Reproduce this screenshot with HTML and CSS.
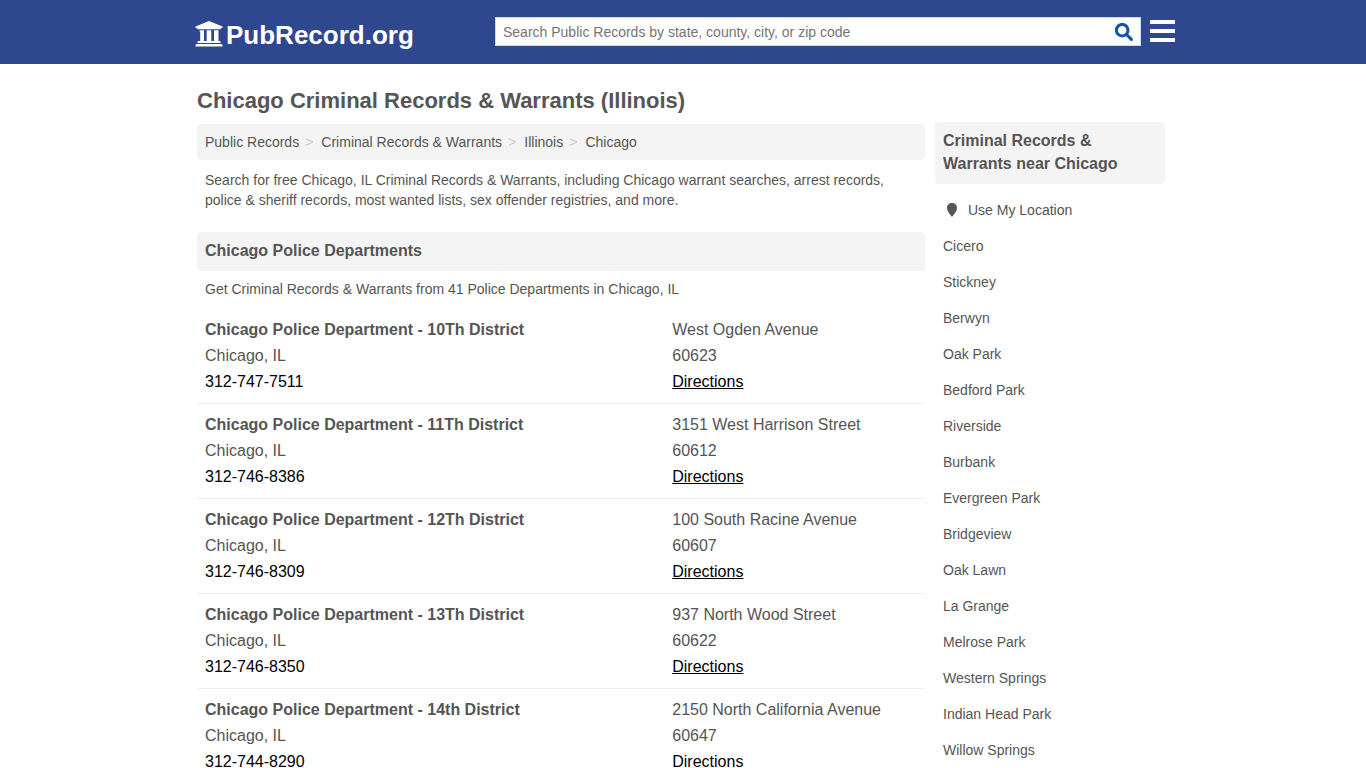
FILE: index.html
```html
<!DOCTYPE html>
<html lang="en">
	<head>
		<meta charset="utf-8" />
		<title>Chicago Criminal Records &amp; Warrants (Illinois)</title>
		<meta name="viewport" content="width=device-width, initial-scale=1" />
		<link rel="stylesheet" href="styles.css">
	</head>
	<body>

		<header class="header">
			<div class="header-inner">
				<a class="logo" href="#">
					<svg class="logo-icon" viewBox="0 0 28 26" aria-hidden="true">
						<path d="M14 0 L27.5 5.5 V7 H26 Q26 8.3 25 8.3 H3 Q2 8.3 2 7 H0.5 V5.5 Z M4.5 9.3 H9 V20 H11.7 V9.3 H16.3 V20 H19 V9.3 H23.5 V20 H24.5 Q25.5 20 25.5 21 V22 H2.5 V21 Q2.5 20 3.5 20 H5.2 V10.5 H4.5 Z M2 23 H26 Q27.5 23 27.5 24.2 V25.4 H0.5 V24.2 Q0.5 23 2 23 Z" />
					</svg>
					<span>PubRecord.org</span>
				</a>
				<form class="search">
					<input class="search-input" type="text" aria-label="Search Public Records" placeholder="Search Public Records by state, county, city, or zip code" />
					<button class="search-button" type="button" aria-label="Search">
						<svg viewBox="0 0 18 18" aria-hidden="true">
							<circle cx="7.2" cy="7.2" r="5.8" />
							<path d="M11.5 11.5 L16.4 16.4" />
						</svg>
					</button>
				</form>
				<button class="menu" type="button" aria-label="Menu">
					<span></span>
					<span></span>
					<span></span>
				</button>
			</div>
		</header>

		<div class="container">

			<main class="main">
				<h1>Chicago Criminal Records &amp; Warrants (Illinois)</h1>

				<ol class="breadcrumb">
					<li><a href="#">Public Records</a></li>
					<li><a href="#">Criminal Records &amp; Warrants</a></li>
					<li><a href="#">Illinois</a></li>
					<li><a href="#">Chicago</a></li>
				</ol>

				<p class="intro">Search for free Chicago, IL Criminal Records &amp; Warrants, including Chicago warrant searches, arrest records, police &amp; sheriff records, most wanted lists, sex offender registries, and more.</p>

				<h2 class="heading">Chicago Police Departments</h2>
				<p class="summary">Get Criminal Records &amp; Warrants from 41 Police Departments in Chicago, IL</p>

				<div class="listing">
					<div>
						<h3>Chicago Police Department - 10Th District</h3>
						<p>Chicago, IL</p>
						<a class="phone" href="tel:312-747-7511">312-747-7511</a>
					</div>
					<div>
						<p>West Ogden Avenue</p>
						<p>60623</p>
						<a class="directions" href="#">Directions</a>
					</div>
				</div>

				<div class="listing">
					<div>
						<h3>Chicago Police Department - 11Th District</h3>
						<p>Chicago, IL</p>
						<a class="phone" href="tel:312-746-8386">312-746-8386</a>
					</div>
					<div>
						<p>3151 West Harrison Street</p>
						<p>60612</p>
						<a class="directions" href="#">Directions</a>
					</div>
				</div>

				<div class="listing">
					<div>
						<h3>Chicago Police Department - 12Th District</h3>
						<p>Chicago, IL</p>
						<a class="phone" href="tel:312-746-8309">312-746-8309</a>
					</div>
					<div>
						<p>100 South Racine Avenue</p>
						<p>60607</p>
						<a class="directions" href="#">Directions</a>
					</div>
				</div>

				<div class="listing">
					<div>
						<h3>Chicago Police Department - 13Th District</h3>
						<p>Chicago, IL</p>
						<a class="phone" href="tel:312-746-8350">312-746-8350</a>
					</div>
					<div>
						<p>937 North Wood Street</p>
						<p>60622</p>
						<a class="directions" href="#">Directions</a>
					</div>
				</div>

				<div class="listing">
					<div>
						<h3>Chicago Police Department - 14th District</h3>
						<p>Chicago, IL</p>
						<a class="phone" href="tel:312-744-8290">312-744-8290</a>
					</div>
					<div>
						<p>2150 North California Avenue</p>
						<p>60647</p>
						<a class="directions" href="#">Directions</a>
					</div>
				</div>
			</main>

			<aside class="sidebar">
				<h2 class="heading">Criminal Records &amp; Warrants near Chicago</h2>
				<ul class="nearby">
					<li>
						<a href="#">
							<svg class="pin" viewBox="0 0 10 14" aria-hidden="true">
								<path d="M5 0 C8 0 10 2.1 10 4.9 C10 7.8 7.2 11 5 14 C2.8 11 0 7.8 0 4.9 C0 2.1 2 0 5 0 Z" />
							</svg>
							Use My Location
						</a>
					</li>
					<li><a href="#">Cicero</a></li>
					<li><a href="#">Stickney</a></li>
					<li><a href="#">Berwyn</a></li>
					<li><a href="#">Oak Park</a></li>
					<li><a href="#">Bedford Park</a></li>
					<li><a href="#">Riverside</a></li>
					<li><a href="#">Burbank</a></li>
					<li><a href="#">Evergreen Park</a></li>
					<li><a href="#">Bridgeview</a></li>
					<li><a href="#">Oak Lawn</a></li>
					<li><a href="#">La Grange</a></li>
					<li><a href="#">Melrose Park</a></li>
					<li><a href="#">Western Springs</a></li>
					<li><a href="#">Indian Head Park</a></li>
					<li><a href="#">Willow Springs</a></li>
				</ul>
			</aside>

		</div>

	</body>
</html>
```

FILE: styles.css
```css
* {
	box-sizing: border-box;
	margin: 0;
	padding: 0;
}

body {
	background: #fff;
	color: #555;
	font-family: "Liberation Sans", Arial, Helvetica, sans-serif;
	font-size: 14px;
	line-height: 20px;
}

a {
	color: inherit;
	text-decoration: none;
}

button {
	background: none;
	border: 0;
	cursor: pointer;
}

ul, ol {
	list-style: none;
}

.header {
	background: #2e478f;
	padding: 17px 0 13px;
}

.header-inner {
	display: flex;
	align-items: flex-start;
	max-width: 984px;
	margin: 0 auto;
	padding-left: 4px;
}

.logo {
	display: flex;
	align-items: flex-start;
	gap: 3px;
	width: 300px;
	padding-top: 3px;
	color: #fff;
	font-size: 26px;
	font-weight: bold;
	line-height: 31px;
}

.logo-icon {
	width: 28px;
	height: 26px;
	margin-top: 1px;
	fill: #fff;
}

.search {
	display: flex;
	flex: 1;
	height: 29px;
	background: #fff;
	border: 1px solid #cbd8f0;
}

.search-input {
	flex: 1;
	min-width: 0;
	padding: 0 8px 0 7px;
	border: 0;
	background: none;
	color: #555;
	font: inherit;
}

.search-input::placeholder {
	color: #757575;
}

.search-button {
	width: 33px;
	padding-top: 3px;
}

.search-button svg {
	width: 18px;
	height: 18px;
	fill: none;
	stroke: #0f549e;
	stroke-width: 3;
	stroke-linecap: round;
}

.menu {
	display: flex;
	flex-direction: column;
	gap: 5px;
	width: 25px;
	margin: 3px 0 0 9px;
}

.menu span {
	height: 4px;
	background: #fff;
}

.container {
	display: flex;
	align-items: flex-start;
	gap: 10px;
	max-width: 980px;
	margin: 0 auto;
	padding: 22px 8px 22px 4px;
}

.main {
	flex: 1;
	min-width: 0;
}

h1 {
	margin-bottom: 8px;
	font-size: 22px;
	line-height: 30px;
}

.breadcrumb {
	display: flex;
	flex-wrap: wrap;
	padding: 8px;
	background: #f4f4f4;
	border-radius: 4px;
}

.breadcrumb li + li:before {
	content: ">";
	padding: 0 8px 0 6px;
	color: #ccc;
}

.intro {
	padding: 10px 8px 22px;
}

.heading {
	padding: 7px 8px 9px;
	background: #f4f4f4;
	border-radius: 4px;
	font-size: 16px;
	line-height: 23px;
}

.summary {
	padding: 8px 8px 10px;
}

.listing {
	display: grid;
	grid-template-columns: 21fr 11fr;
	padding: 8px;
	border-bottom: 1px solid #eee;
	font-size: 16px;
	line-height: 26px;
}

.listing h3 {
	font-size: 16px;
}

.phone, .directions {
	color: #000;
}

.directions {
	text-decoration: underline;
}

.sidebar {
	width: 230px;
	padding-top: 36px;
}

.nearby {
	padding-top: 8px;
}

.nearby a {
	display: flex;
	align-items: center;
	padding: 8px;
}

.pin {
	width: 10px;
	height: 14px;
	margin: 0 11px 0 4px;
	fill: #555;
}

@media screen and (max-width: 700px) {
	.container {
		flex-direction: column;
	}
	.main, .sidebar {
		width: 100%;
	}
	.sidebar {
		padding-top: 0;
	}
	.logo {
		width: auto;
		margin-right: 10px;
	}
}
```
